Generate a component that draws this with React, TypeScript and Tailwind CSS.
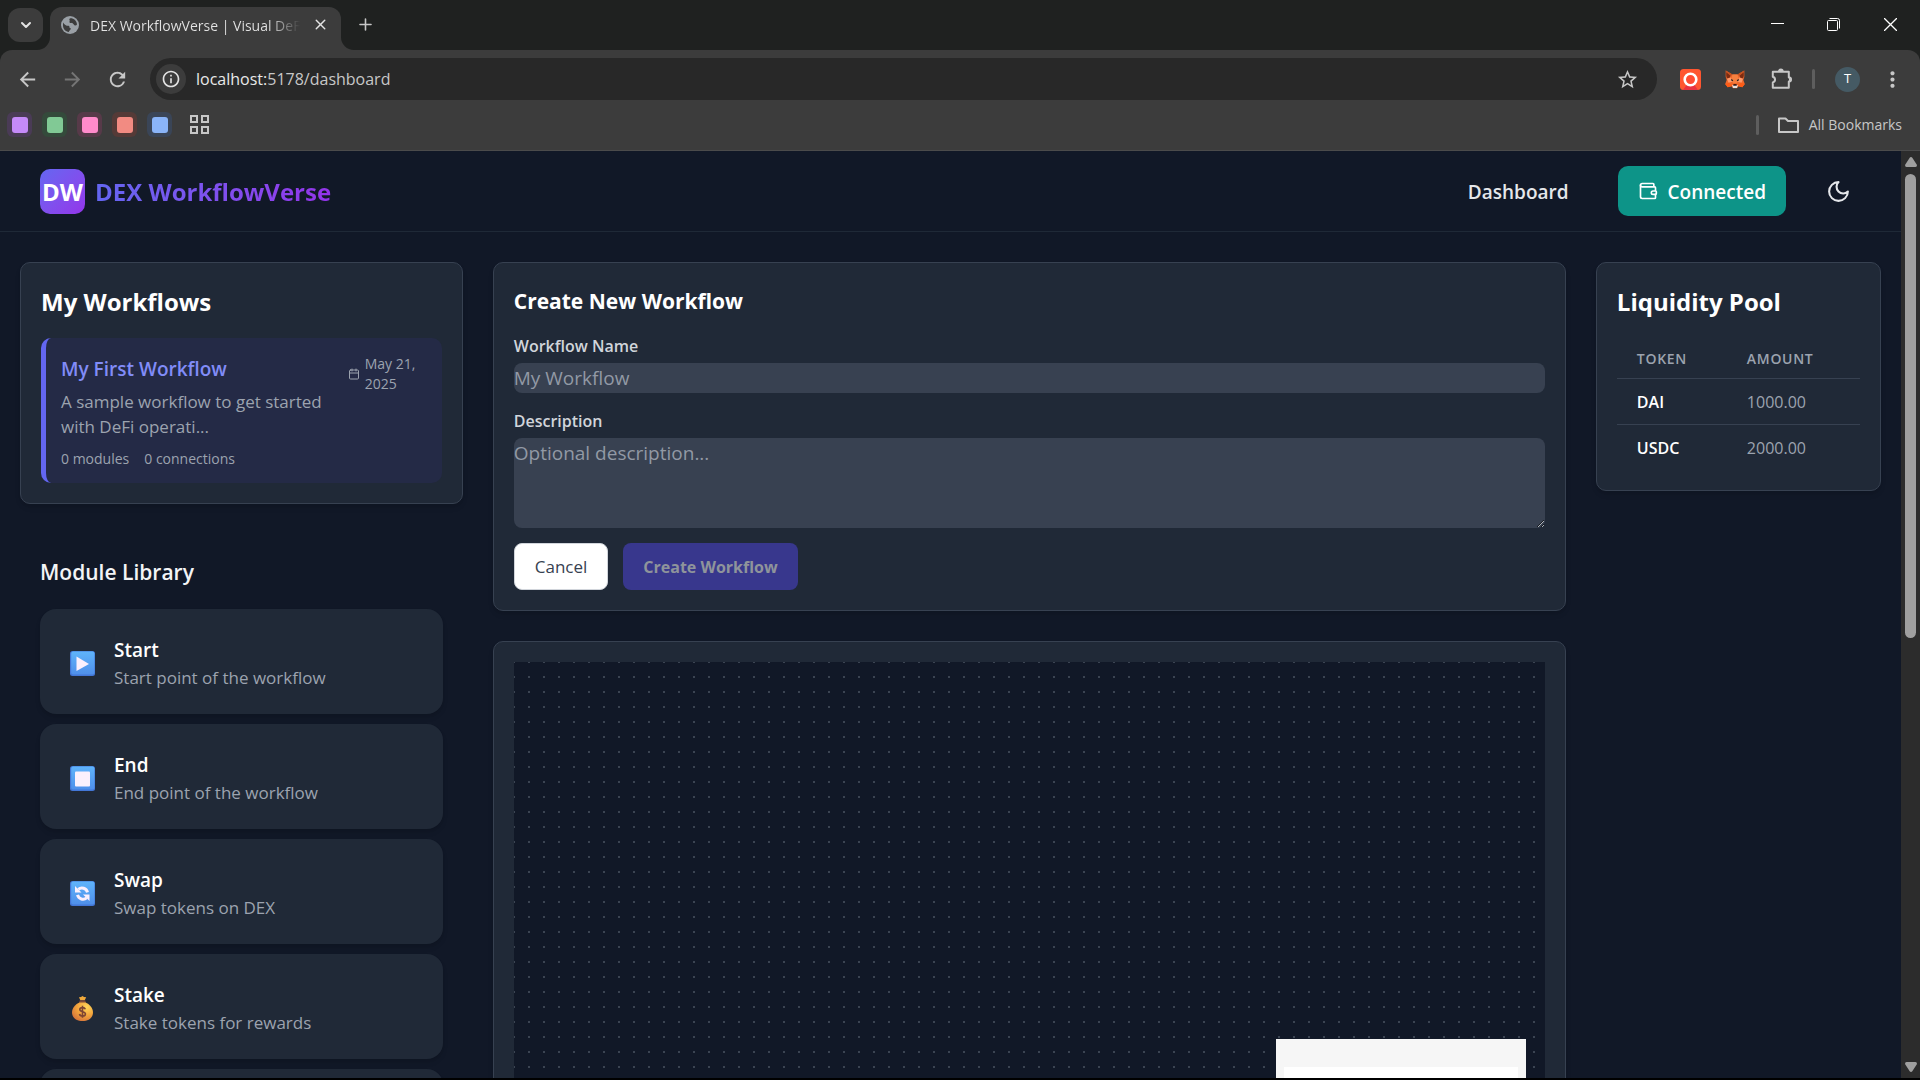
import type { ReactNode } from "react";
import { Calendar, ChevronDown, Plus, Wallet, X } from "lucide-react";
import {
  MdArrowBack,
  MdArrowForward,
  MdInfoOutline,
  MdMoreVert,
  MdRefresh,
  MdStarBorder,
} from "react-icons/md";

const bookmarks = [
  { name: "Purple group", outer: "bg-[#4a3b56]", inner: "bg-[#c58af9]" },
  { name: "Green group", outer: "bg-[#344a3b]", inner: "bg-[#81c995]" },
  { name: "Pink group", outer: "bg-[#573a49]", inner: "bg-[#ff8bcb]" },
  { name: "Red group", outer: "bg-[#553a37]", inner: "bg-[#f28b82]" },
  { name: "Blue group", outer: "bg-[#3a4557]", inner: "bg-[#8ab4f8]" },
];

const tokens = [
  { symbol: "DAI", amount: "1000.00" },
  { symbol: "USDC", amount: "2000.00" },
];

function GlobeIcon() {
  return (
    <svg viewBox="0 0 18 18" className="size-[18px] shrink-0" aria-hidden="true">
      <circle cx="9" cy="9" r="9" fill="#9aa0a6" />
      <path
        d="M2 6.400c1.600 2.500 3.300 3.400 5.600 3.300.9 0 .8 1 .8 1.500 0 .7 1.500.6 1.400 1.500-.1 1.300-1.700 1.700-2 3.300C4.700 15.600 2 13 2 9.500ZM9.500 2.200c-1.200.3-1.500 1.400-.9 2.100.5.6-.4 1.200-.2 1.900.4 1 2.200.2 3.300 1.100.9.8 1.300 2.200 2.600 2.100.8 0 1.300-.4 1.700-.9C15.800 4.900 13 2.200 9.500 2.200Z"
        fill="#3c3c3c"
      />
    </svg>
  );
}

function FoxIcon() {
  return (
    <svg viewBox="0 0 20 20" className="size-5" aria-hidden="true">
      <path d="M.7 1.500 7.500 5.500h5l6.800-4V8l-1 3 1.500 4-2.500 3.300-3.800-1-1.500 2H8l-1.500-2-3.800 1L.2 15l1.500-4-1-3Z" fill="#f0692c" />
      <path d="M1.200 3 5.800 6.500 4.500 9 2 9.500 1.200 7ZM18.800 3l-4.600 3.500L15.500 9l2.500.5.800-2.500Z" fill="#7d2c12" />
      <path d="m.7 1.500 6.800 4L5.800 7 1.200 3ZM19.300 1.500l-6.800 4L14.200 7l4.600-4Z" fill="#c4501f" />
      <path d="M2 9.700 5.500 8.500 8 12.500l-4.500 1.300ZM18 9.700l-3.500-1.200-2.500 4 4.500 1.300Z" fill="#ff9a6b" />
      <path d="M7.500 5.500h5l1 4L12 14H8L6.500 9.500Z" fill="#f7803f" />
      <path d="m6 10 2.200 1.100-.4 1.100-1.600-.7ZM14 10l-2.200 1.100.4 1.100 1.600-.7Z" fill="#2b2523" />
      <path d="M.2 15 4 13.800l3 2-.5 1.500-3.800 1ZM19.800 15 16 13.800l-3 2 .5 1.500 3.800 1Z" fill="#ff5c16" />
      <path d="M7.200 16h5.600l-.8 3H8Z" fill="#e6e2e0" />
      <path d="M8.500 15h3l.3 1.700H8.200Z" fill="#3b1a12" />
    </svg>
  );
}

function PuzzleIcon() {
  return (
    <svg viewBox="0 0 22 22" className="size-[22px]" aria-hidden="true">
      <path
        d="M2.800 3.800h16v5.700a2 2 0 0 1 0 4v6.200h-16v-5.200a3 3 0 0 0 0-5.800Z"
        fill="none"
        stroke="#c7c7c7"
        strokeWidth="2"
        strokeLinejoin="round"
      />
      <path d="M7.900 3.500a2.900 2.900 0 0 1 5.800 0ZM19 8.600a2.900 2.900 0 0 1 0 5.800Z" fill="#c7c7c7" />
    </svg>
  );
}

function MoonIcon() {
  return (
    <svg
      viewBox="0 0 24 24"
      className="size-[25px]"
      fill="none"
      stroke="currentColor"
      strokeWidth="2"
      strokeLinecap="round"
      strokeLinejoin="round"
      aria-hidden="true"
    >
      <path d="M12 3a6 6 0 0 0 9 9 9 9 0 1 1-9-9Z" />
    </svg>
  );
}

function BlueKey({ id, children }: { id: string; children: ReactNode }) {
  return (
    <svg viewBox="0 0 25 25" className="size-[25px]" aria-hidden="true">
      <defs>
        <linearGradient id={id} x1="0" y1="0" x2="0" y2="1">
          <stop offset="0" stopColor="#5fb4fb" />
          <stop offset="1" stopColor="#4f8fea" />
        </linearGradient>
      </defs>
      <rect width="25" height="25" rx="2.500" fill="#4377d8" />
      <rect x="1.200" y="0.600" width="23.200" height="23" rx="2" fill={`url(#${id})`} />
      {children}
    </svg>
  );
}

function MoneyBag() {
  return (
    <svg viewBox="0 0 25 25" className="size-[25px]" aria-hidden="true">
      <defs>
        <radialGradient id="bag" cx="0.7" cy="0.25" r="0.9">
          <stop offset="0" stopColor="#ffd75a" />
          <stop offset="0.5" stopColor="#f2a33c" />
          <stop offset="1" stopColor="#cf6b3a" />
        </radialGradient>
      </defs>
      <path d="M9 1.200 11 1l1.500-1L14 1l2.200.2-1.500 3h-4.400Z" fill="#f0a93b" />
      <path d="M9.800 4.200h5.400l1 3H8.800Z" fill="#7d4a3a" />
      <path d="M9.500 6.500h6c4 1.500 7.500 5.500 7.500 10 0 5-4 8.500-10.500 8.500S2 21.500 2 16.500c0-4.500 3.500-8.500 7.500-10Z" fill="url(#bag)" />
      <path
        d="M15.300 13.300c-.4-1.300-1.500-1.700-2.800-1.700-1.500 0-2.700.7-2.700 2 0 3 5.600 1.300 5.600 4.300 0 1.400-1.300 2.100-2.900 2.100-1.500 0-2.700-.6-3-2M12.500 9.800v12"
        fill="none"
        stroke="#7d4533"
        strokeWidth="1.600"
      />
    </svg>
  );
}

const modules = [
  {
    name: "Start",
    text: "Start point of the workflow",
    icon: (
      <BlueKey id="key-start">
        <path d="M6.500 5.500 19 13 6.500 20Z" fill="#fbf0fd" />
      </BlueKey>
    ),
  },
  {
    name: "End",
    text: "End point of the workflow",
    icon: (
      <BlueKey id="key-end">
        <rect x="5" y="5.500" width="15" height="15" rx="1" fill="#fbf0fd" />
      </BlueKey>
    ),
  },
  {
    name: "Swap",
    text: "Swap tokens on DEX",
    icon: (
      <BlueKey id="key-swap">
        <path
          d="M8.300 8.300c3.200-2.600 8-1.200 9.200 3M16.700 16.900c-3.200 2.600-8 1.200-9.200-3"
          fill="none"
          stroke="#fbf0fd"
          strokeWidth="3"
        />
        <path d="M5 5v6.500h6.500ZM19.500 20v-6.500H13Z" fill="#fbf0fd" />
      </BlueKey>
    ),
  },
  { name: "Stake", text: "Stake tokens for rewards", icon: <MoneyBag /> },
];

function TabStrip() {
  return (
    <div className="flex h-[50px] items-end bg-[#1f2120] pl-2">
      <button
        type="button"
        aria-label="Search tabs"
        className="mb-2 flex h-[34px] w-[35px] items-center justify-center rounded-xl bg-[#3c3c3c] text-[#e3e3e3]"
      >
        <ChevronDown size={16} strokeWidth={3} />
      </button>

      <div className="-ml-1.5 flex items-end">
        <svg viewBox="0 0 13 13" className="size-[13px]" aria-hidden="true">
          <path d="M13 0v13H0A13 13 0 0 0 13 0Z" fill="#3c3c3c" />
        </svg>
        <div className="flex h-[43px] w-[291px] items-center rounded-t-xl bg-[#3c3c3c] pr-3 pb-2 pl-[11px]">
          <GlobeIcon />
          <span className="ml-[11px] bg-gradient-to-r from-[#e3e3e3] from-85% to-transparent bg-clip-text pt-0.5 text-[14px] whitespace-nowrap text-transparent">
            DEX WorkflowVerse | Visual DeF
          </span>
          <button type="button" aria-label="Close tab" className="ml-auto text-[#e3e3e3]">
            <X size={17} strokeWidth={2} />
          </button>
        </div>
        <svg viewBox="0 0 13 13" className="size-[13px]" aria-hidden="true">
          <path d="M0 0v13h13A13 13 0 0 1 0 0Z" fill="#3c3c3c" />
        </svg>
      </div>

      <button type="button" aria-label="New tab" className="mb-4 ml-0.5 text-[#c7c7c7]">
        <Plus size={19} strokeWidth={2} />
      </button>

      <div className="ml-auto flex h-full items-center pb-0.5 text-white">
        <button type="button" aria-label="Minimize" className="flex w-14 justify-center">
          <svg viewBox="0 0 13 13" className="size-[13px]" stroke="currentColor">
            <path d="M0 5.500h13" />
          </svg>
        </button>
        <button type="button" aria-label="Restore" className="flex w-14 justify-center">
          <svg viewBox="0 0 13 13" className="size-[13px]" fill="none" stroke="currentColor">
            <rect x="0.500" y="2.500" width="10" height="10" rx="1" />
            <path d="M2.500.5h8a2 2 0 0 1 2 2v8" />
          </svg>
        </button>
        <button type="button" aria-label="Close" className="flex w-[59px] justify-center">
          <svg viewBox="0 0 13 13" className="size-[13px]" stroke="currentColor" strokeWidth="1.300">
            <path d="m0 0 13 13M13 0 0 13" />
          </svg>
        </button>
      </div>
    </div>
  );
}

function Toolbar() {
  return (
    <div className="bg-[#1f2120]">
      <div className="rounded-t-xl border-b border-[#4b4b4b] bg-[#3c3c3c]">
        <div className="flex h-[58px] items-center pl-4 text-[#c7c7c7]">
          <button type="button" aria-label="Back">
            <MdArrowBack size={23} />
          </button>
          <button type="button" aria-label="Forward" className="ml-[22px] text-[#757575]">
            <MdArrowForward size={23} />
          </button>
          <button type="button" aria-label="Reload" className="ml-[22px]">
            <MdRefresh size={23} />
          </button>

          <div className="ml-[21px] flex h-[42px] flex-1 items-center rounded-full bg-[#282828] px-1.5">
            <button
              type="button"
              aria-label="Site information"
              className="flex size-[30px] items-center justify-center rounded-full bg-[#3c3c3c] text-[#e3e3e3]"
            >
              <MdInfoOutline size={20} />
            </button>
            <span className="ml-2.5 flex-1 text-[16px] text-[#c7c7c7]">
              <span className="text-[#e8e8e8]">localhost:</span>5178/dashboard
            </span>
            <button type="button" aria-label="Bookmark this tab" className="mr-3">
              <MdStarBorder size={23} />
            </button>
          </div>

          <button type="button" aria-label="Recorder" className="ml-[23px]">
            <svg viewBox="0 0 21 21" className="size-[21px]" aria-hidden="true">
              <rect width="21" height="21" rx="3.500" fill="#ff5630" />
              <path d="M3 21 8 14h5l5 7Z" fill="#e8323f" />
              <circle cx="10.500" cy="10.500" r="5.800" fill="#ff4d33" stroke="#fff" strokeWidth="2.600" />
            </svg>
          </button>
          <button type="button" aria-label="Wallet extension" className="ml-6">
            <FoxIcon />
          </button>
          <button type="button" aria-label="Extensions" className="ml-[25px]">
            <PuzzleIcon />
          </button>
          <span className="ml-5 h-5 w-[3px] rounded-full bg-[#5e5e5e]" />
          <button
            type="button"
            aria-label="Profile"
            className="ml-5 flex size-[25px] items-center justify-center rounded-full bg-[#455a64] text-[13px] text-white"
          >
            T
          </button>
          <button type="button" aria-label="Menu" className="mr-[15px] ml-5">
            <MdMoreVert size={25} />
          </button>
        </div>

        <div className="flex h-[42px] items-center pr-[18px] pb-[9px] pl-[7px]">
          <div className="flex gap-2.5">
            {bookmarks.map((b) => (
              <button
                key={b.name}
                type="button"
                aria-label={b.name}
                className={`flex size-[25px] items-center justify-center rounded-md ${b.outer}`}
              >
                <span className={`size-4 rounded-[3px] ${b.inner}`} />
              </button>
            ))}
          </div>
          <button type="button" aria-label="Apps" className="ml-[18px]">
            <svg viewBox="0 0 19 19" className="size-[19px]" fill="none" stroke="#c7c7c7" strokeWidth="2">
              <path d="M1 1h6v6H1ZM12 1h6v6h-6ZM1 12h6v6H1ZM12 12h6v6h-6Z" />
            </svg>
          </button>
          <span className="ml-auto h-5 w-[3px] rounded-full bg-[#5e5e5e]" />
          <button type="button" className="ml-[19px] flex items-center gap-2.5 text-[14px] text-[#c7c7c7]">
            <svg viewBox="0 0 21 16" className="h-4 w-[21px]" fill="none" stroke="currentColor" strokeWidth="2" strokeLinejoin="round">
              <path d="M1 1.500h6.500l2.500 2.500h10v11H1Z" />
            </svg>
            All Bookmarks
          </button>
        </div>
      </div>
    </div>
  );
}

function Header() {
  return (
    <header className="flex h-[81px] shrink-0 items-center border-b border-[#1f2937] px-10">
      <a href="#home" className="flex items-center gap-2.5">
        <span className="flex size-[45px] items-center justify-center rounded-[10px] bg-gradient-to-br from-[#6366f1] to-[#9333ea] pt-0.5 text-[24px] font-bold text-white">
          DW
        </span>
        <span className="bg-gradient-to-r from-[#6366f1] to-[#9333ea] bg-clip-text pt-0.5 text-[24px] font-bold text-transparent">
          DEX WorkflowVerse
        </span>
      </a>
      <nav className="ml-auto flex items-center">
        <a href="#dashboard" className="pt-0.5 text-[19px] font-semibold text-[#e5e7eb]">
          Dashboard
        </a>
        <button
          type="button"
          className="ml-[49px] flex h-[50px] items-center gap-2.5 rounded-[10px] bg-[#0d9488] px-5 text-[19px] font-semibold text-white"
        >
          <Wallet size={20} />
          <span className="pt-0.5">Connected</span>
        </button>
        <button
          type="button"
          aria-label="Toggle theme"
          className="ml-[30px] flex size-[45px] items-center justify-center text-[#e5e7eb]"
        >
          <MoonIcon />
        </button>
      </nav>
    </header>
  );
}

function Card({ children }: { children: ReactNode }) {
  return (
    <section className="rounded-[10px] border border-[#374151] bg-[#202937] p-5 shadow-md">
      {children}
    </section>
  );
}

function MyWorkflows() {
  return (
    <Card>
      <h2 className="mb-[18px] text-[24px] leading-[37px] font-bold text-white">My Workflows</h2>
      <article className="flex items-start justify-between rounded-[10px] border-l-[5px] border-[#6366f1] bg-[#242a46] px-[15px] pt-4 pb-3.5">
        <div className="w-[270px]">
          <h3 className="text-[19px] leading-[30px] font-semibold text-[#818cf8]">
            My First Workflow
          </h3>
          <p className="mt-[5px] text-[17px] leading-[25px] text-[#9ca3af]">
            A sample workflow to get started with DeFi operati...
          </p>
          <p className="mt-2.5 flex gap-[15px] text-[14px] leading-5 text-[#9ca3af]">
            <span>0 modules</span>
            <span>0 connections</span>
          </p>
        </div>
        <div className="flex w-[79px] items-center gap-[5px] text-[14px] leading-5 text-[#9ca3af]">
          <Calendar size={12} className="shrink-0" />
          <span>May 21, 2025</span>
        </div>
      </article>
    </Card>
  );
}

function ModuleLibrary() {
  return (
    <section className="p-5">
      <h2 className="mb-[18px] text-[21px] leading-[37px] font-semibold text-[#f3f4f6]">
        Module Library
      </h2>
      <ul className="flex flex-col gap-2.5">
        {modules.map((m) => (
          <li
            key={m.name}
            className="flex items-center gap-[15px] rounded-2xl bg-[#202937] px-[25px] pt-[26px] pb-6 shadow-md"
          >
            <span className="flex w-[34px] justify-center pt-0.5">{m.icon}</span>
            <div>
              <h3 className="text-[19px] leading-[30px] font-semibold text-white">{m.name}</h3>
              <p className="text-[17px] leading-[25px] text-[#9ca3af]">{m.text}</p>
            </div>
          </li>
        ))}
        <li className="h-[105px] rounded-2xl bg-[#202937] shadow-md" />
      </ul>
    </section>
  );
}

function CreateWorkflow() {
  return (
    <Card>
      <h2 className="mb-[13px] text-[21px] leading-[37px] font-bold text-white">
        Create New Workflow
      </h2>
      <form className="flex flex-col gap-[15px]">
        <div className="flex flex-col gap-[3px]">
          <label htmlFor="name" className="text-[16px] leading-[27px] font-semibold text-[#d1d5db]">
            Workflow Name
          </label>
          <input
            id="name"
            placeholder="My Workflow"
            className="h-[30px] rounded-lg bg-[#384151] text-[19px] text-white placeholder:text-[#9299a5]"
          />
        </div>
        <div className="flex flex-col gap-[3px]">
          <label
            htmlFor="description"
            className="text-[16px] leading-[27px] font-semibold text-[#d1d5db]"
          >
            Description
          </label>
          <textarea
            id="description"
            placeholder="Optional description..."
            className="h-[90px] rounded-lg bg-[#384151] text-[19px] leading-[30px] text-white placeholder:text-[#9299a5]"
          />
        </div>
        <div className="flex gap-[15px]">
          <button
            type="button"
            className="h-[47px] rounded-lg border border-[#d1d5db] bg-white px-5 text-[17px] font-medium text-[#374151]"
          >
            Cancel
          </button>
          <button
            type="submit"
            disabled
            className="h-[47px] rounded-lg bg-[#38378d] px-5 text-[16px] font-bold text-[#8f949b]"
          >
            Create Workflow
          </button>
        </div>
      </form>
    </Card>
  );
}

function Canvas() {
  return (
    <Card>
      <div className="relative h-[583px] bg-[#111827] bg-[radial-gradient(circle_at_1px_1px,#3b4452_1px,transparent_1px)] bg-[size:15px_15px] bg-[position:-1px_-1px]">
        {/* minimap */}
        <div className="absolute right-[19px] bottom-[19px] h-[187px] w-[250px] bg-[#f6f6f6] px-2 pt-7">
          <div className="h-[130px] bg-white" />
        </div>
      </div>
    </Card>
  );
}

function LiquidityPool() {
  return (
    <Card>
      <h2 className="mb-[18px] text-[24px] leading-[37px] font-bold text-white">Liquidity Pool</h2>
      <table className="w-full text-left text-[16px]">
        <thead>
          <tr className="h-10 border-b border-[#374151] text-[14px] tracking-wider text-[#9ca3af]">
            <th className="w-[110px] pt-0.5 pl-5 font-semibold">TOKEN</th>
            <th className="pt-0.5 pl-5 font-semibold">AMOUNT</th>
          </tr>
        </thead>
        <tbody className="divide-y divide-[#374151]">
          {tokens.map((t) => (
            <tr key={t.symbol} className="h-[46px]">
              <td className="pt-0.5 pl-5 font-semibold text-white">{t.symbol}</td>
              <td className="pt-0.5 pl-5 text-[#9ca3af]">{t.amount}</td>
            </tr>
          ))}
        </tbody>
      </table>
    </Card>
  );
}

function Scrollbar() {
  return (
    <div className="flex w-[19px] shrink-0 flex-col items-center bg-[#2c2c2c] py-1.5" aria-hidden="true">
      <svg viewBox="0 0 12 10" className="h-2.5 w-3">
        <path d="M6 0q.8 0 1.300.8L12 8q0 2-1.500 2h-9Q0 10 0 8L4.700.8Q5.200 0 6 0Z" fill="#9f9f9f" />
      </svg>
      <div className="mt-[7px] flex w-[11px] flex-1 flex-col">
        <div className="h-[464px] rounded-full bg-[#9f9f9f]" />
      </div>
      <svg viewBox="0 0 12 10" className="h-2.5 w-3">
        <path d="M6 10q.8 0 1.300-.8L12 2q0-2-1.500-2h-9Q0 0 0 2l4.700 7.200Q5.200 10 6 10Z" fill="#9f9f9f" />
      </svg>
    </div>
  );
}

export default function App() {
  return (
    <div className="flex h-screen flex-col overflow-hidden border-b-2 border-black bg-[#111827] font-['Open_Sans',sans-serif]">
      <TabStrip />
      <Toolbar />
      <div className="flex min-h-0 flex-1">
        <div className="flex-1 overflow-hidden">
          <Header />
          <main className="grid grid-cols-12 items-start gap-[30px] px-5 pt-[30px]">
            <div className="col-span-3 flex flex-col">
              <MyWorkflows />
              <div className="mt-[30px]">
                <ModuleLibrary />
              </div>
            </div>
            <div className="col-span-7 flex flex-col gap-[30px]">
              <CreateWorkflow />
              <Canvas />
            </div>
            <div className="col-span-2">
              <LiquidityPool />
            </div>
          </main>
        </div>
        <Scrollbar />
      </div>
    </div>
  );
}
